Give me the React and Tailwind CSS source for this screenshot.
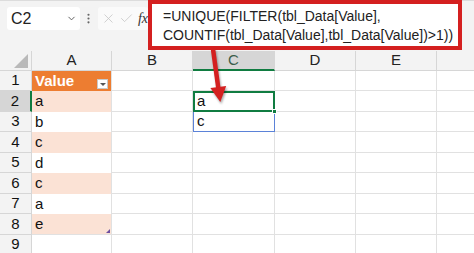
import { ChevronDown, EllipsisVertical, X, Check } from "lucide-react";

const cols = [
  { key: "A", w: "w-[80px]" },
  { key: "B", w: "w-[81px]" },
  { key: "C", w: "w-[82px]" },
  { key: "D", w: "w-[81px]" },
  { key: "E", w: "w-[81px]" },
];

const rowH = ["h-[20px]", "h-[21px]", "h-[20px]", "h-[21px]", "h-[20px]", "h-[21px]", "h-[20px]", "h-[21px]", "h-[20px]"];
const values = ["Value", "a", "b", "c", "d", "c", "a", "e", ""];

function Cell({ col, row }) {
  const n = row + 1;
  const grid = "border-r border-b border-[#e1e1e1]";
  if (col === "A") {
    if (n === 1) {
      return (
        <div className="w-[80px] h-full bg-[#ed7d31] border-r border-[#e1e1e1] relative flex items-center pl-[3px] text-white font-bold">
          Value
          <div className="absolute right-[3px] bottom-[2px] w-[11px] h-[10px] bg-white border border-[#c8c8c8] flex items-center justify-center">
            <div className="w-0 h-0 border-l-[3px] border-r-[3px] border-t-[3px] border-l-transparent border-r-transparent border-t-[#555]" />
          </div>
        </div>
      );
    }
    if (n <= 8) {
      const band = n % 2 === 0;
      return (
        <div
          className={
            "w-[80px] h-full border-r border-[#e1e1e1] relative flex items-center pl-[3px] " +
            (band ? "bg-[#fbe2d5] " : "bg-white ") +
            (n === 8 ? "border-b" : "")
          }
        >
          {values[row]}
          {n === 8 && (
            <div className="absolute right-[1px] bottom-[1px] w-0 h-0 border-l-[4px] border-b-[4px] border-l-transparent border-b-[#6d4fa0]" />
          )}
        </div>
      );
    }
  }
  if (col === "C" && n === 2) {
    return (
      <div className="w-[82px] h-full border-2 border-[#107c41] relative flex items-center pl-[2px]">
        a
        <div className="absolute -right-[4px] -bottom-[4px] w-[5px] h-[5px] bg-[#107c41] border border-white" />
      </div>
    );
  }
  if (col === "C" && n === 3) {
    return (
      <div className="w-[82px] h-full border border-t-0 border-[#5b82d8] flex items-center pl-[3px]">
        c
      </div>
    );
  }
  const w = cols.find((c) => c.key === col).w;
  return <div className={w + " h-full " + grid} />;
}

export default function App() {
  return (
    <div className="relative w-[474px] h-[253px] overflow-hidden bg-white font-['Liberation_Sans',Arial,sans-serif] text-[15px] text-[#111]">
      {/* formula bar */}
      <div className="h-[51px] bg-[#f3f3f3] border-t border-[#dcdcdc] flex items-start">
        <div className="ml-[7px] mt-[6px] w-[73px] h-[23px] bg-white rounded-[3px] flex items-center justify-between pl-[4px] pr-[3px] text-[16px] text-[#222]">
          C2
          <ChevronDown size={11} strokeWidth={2} className="text-[#555]" />
        </div>
        <EllipsisVertical size={13} className="ml-[2px] mt-[11px] text-[#666]" />
        <div className="ml-[3px] mt-[6px] w-[50px] h-[23px] bg-[#fafafa] rounded-[3px] flex items-center pl-[3px] gap-[3px]">
          <X size={15} strokeWidth={1.3} className="text-[#c6c6c6]" />
          <Check size={15} strokeWidth={1.3} className="text-[#c6c6c6]" />
          <span className="font-['Liberation_Serif',serif] italic text-[14px] text-[#333] ml-[1px]">fx</span>
        </div>
        <div className="-mt-px w-[314px] h-[50px] border-4 border-[#d42020] bg-white pl-[11px] pt-[3px] text-[14px] leading-[19px] text-[#222]">
          <div>=UNIQUE(FILTER(tbl_Data[Value],</div>
          <div>COUNTIF(tbl_Data[Value],tbl_Data[Value])&gt;1))</div>
        </div>
      </div>

      {/* column headers */}
      <div className="flex h-[20px] bg-[#f3f3f3] text-[#222]">
        <div className="w-[32px] h-full border-r border-b border-[#d6d6d6] relative">
          <svg className="absolute right-[3px] bottom-[2px]" width="14" height="14">
            <polygon points="14,0 14,14 0,14" fill="#b9b9b9" />
          </svg>
        </div>
        {cols.map((c) => (
          <div
            key={c.key}
            className={
              c.w +
              " h-full flex items-center justify-center " +
              (c.key === "C"
                ? "bg-[#d6d6d6] border-r border-[#d6d6d6] border-b-2 border-b-[#107c41] text-[#3b5e4a]"
                : "border-r border-b border-[#d6d6d6]")
            }
          >
            {c.key}
          </div>
        ))}
        <div className="flex-1 h-full border-b border-[#d6d6d6]" />
      </div>

      {/* rows */}
      {rowH.map((h, i) => (
        <div key={i} className={"flex " + h}>
          <div
            className={
              "w-[32px] h-full flex items-center justify-center border-b " +
              (i === 1
                ? "bg-[#d6d6d6] border-r-2 border-r-[#107c41] border-b-[#d6d6d6]"
                : "bg-[#f3f3f3] border-r border-[#d6d6d6]")
            }
          >
            {i + 1}
          </div>
          {cols.map((c) => (
            <Cell key={c.key} col={c.key} row={i} />
          ))}
          <div className="flex-1 h-full border-b border-[#e1e1e1]" />
        </div>
      ))}

      {/* red arrow */}
      <svg
        className="absolute left-0 top-0 pointer-events-none drop-shadow-[1px_2px_1px_rgba(0,0,0,0.35)]"
        width="474"
        height="253"
      >
        <line x1="213" y1="49" x2="218.3" y2="88" stroke="#d42020" strokeWidth="4.5" />
        <polygon points="210.4,88.1 226.2,85.9 220.3,101.9" fill="#d42020" />
      </svg>
    </div>
  );
}
